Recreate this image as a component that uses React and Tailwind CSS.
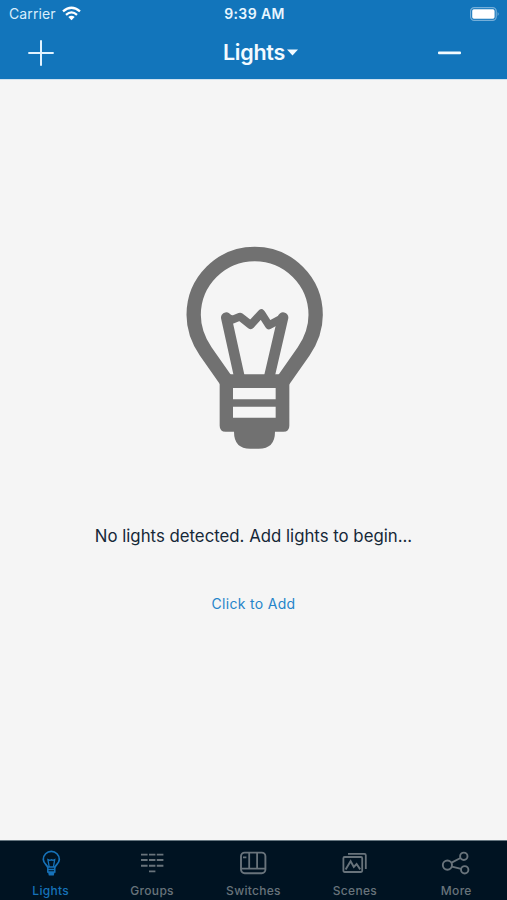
import React from "react";

function BulbIcon() {
  return (
    <svg className="ml-px" width="139" height="205" viewBox="45 30 417 615" fill="none" stroke="#717171">
      <path
        d="M168 436L107 349C83 314 71 277 71 240A183 183 0 0 1 437 240C437 277 425 314 401 349L340 436"
        strokeWidth="43"
      />
      <path d="M169 248L208 425M339 248L298 425" strokeWidth="32" strokeLinecap="round" />
      <path
        d="M169 248L188 254L210 245L242 270L274 235L297 271L339 248"
        strokeWidth="24"
        strokeLinecap="round"
        strokeLinejoin="round"
      />
      <path
        d="M149 418H358V572Q358 590 340 590H315Q315 641 266 641H241Q192 641 192 590H167Q149 590 149 572ZM189 459V493H317V459ZM189 515V548H317V515Z"
        fill="#717171"
        fillRule="evenodd"
        stroke="none"
      />
    </svg>
  );
}

function LightsIcon() {
  return (
    <svg width="30" height="30" viewBox="0 0 30 30" fill="none" stroke="currentColor" strokeWidth="1.7">
      <path d="M11.8 18.5C11.2 16 7.3 14.2 7.3 10.4A8 8 0 0 1 23.3 10.4C23.3 14.2 19.4 16 18.8 18.5" />
      <path d="M13.2 18L11.9 10.6L13.8 11.4L15.6 10.8L17 11.4L18.7 10.6L17.4 18" strokeWidth="1.3" />
      <path d="M11.8 18H18.8V23H11.8ZM11.8 20.5H18.8" strokeWidth="1.5" />
      <path d="M12 23H18.6L17.8 26.4H12.8Z" fill="currentColor" stroke="none" />
    </svg>
  );
}

function GroupsIcon() {
  return (
    <svg width="30" height="30" viewBox="0 0 30 30" fill="none" stroke="currentColor" strokeWidth="1.9">
      <path d="M4 5.6H10.6M12 5.6H18.4M19.8 5.6H26.4M4 11H10.6M12 11H18.4M19.8 11H26.4M4 16.8H10.6M12 16.8H18.4M19.8 16.8H26.4M12 22.4H18.4" />
    </svg>
  );
}

function SwitchesIcon() {
  return (
    <svg width="30" height="30" viewBox="0 0 30 30" fill="none" stroke="currentColor" strokeWidth="1.9">
      <rect x="3" y="3.6" width="24.4" height="20.6" rx="3.6" />
      <path d="M3.4 19.6H27M11.2 4V19.6M19.1 4V19.6M5 8.4H8.4" strokeWidth="1.8" />
    </svg>
  );
}

function ScenesIcon() {
  return (
    <svg width="30" height="30" viewBox="0 0 30 30" fill="none" stroke="currentColor" strokeWidth="1.8">
      <rect x="3.4" y="8" width="18.8" height="15" rx="1.2" />
      <path d="M8 4.8H24.4Q25.8 4.8 25.8 6.2V20" />
      <path d="M5.6 20.4L10.6 12.2L13.8 18L16.6 15L20.2 20.4" strokeWidth="1.9" />
    </svg>
  );
}

function MoreIcon() {
  return (
    <svg width="30" height="30" viewBox="0 0 30 30" fill="none" stroke="currentColor" strokeWidth="1.9">
      <circle cx="6.4" cy="16.1" r="4.6" />
      <circle cx="22.8" cy="7.3" r="3.7" />
      <circle cx="23.7" cy="20.8" r="3.7" />
      <path d="M10.6 13.6L19.5 9M11 17.6L20 19.8" />
    </svg>
  );
}

const tabs = [
  { name: "Lights", Icon: LightsIcon },
  { name: "Groups", Icon: GroupsIcon },
  { name: "Switches", Icon: SwitchesIcon },
  { name: "Scenes", Icon: ScenesIcon },
  { name: "More", Icon: MoreIcon },
];

function StatusBar() {
  return (
    <div className="grid h-[27px] grid-cols-3 items-center pl-[9px] pr-[7px]">
      <div className="flex items-center gap-[6px] text-[#d9edfb]">
        <span className="text-[14px] tracking-[0.1px]">Carrier</span>
        <svg width="19" height="15" viewBox="0 0 19 15" fill="none" stroke="#fff" strokeWidth="2.3">
          <path d="M1 5.4Q9.5 -2 18 5.4M4 8.8Q9.5 4 15 8.8" />
          <path d="M6.3 11.1Q9.5 8.5 12.7 11.1L9.5 14.3Z" fill="#fff" stroke="none" />
        </svg>
      </div>
      <span className="text-center text-[14px] font-semibold tracking-[0.4px] text-[#e8f6ff]">
        9:39 AM
      </span>
      <svg className="justify-self-end" width="30" height="14" viewBox="0 0 30 14">
        <rect x="0.6" y="0.6" width="25.6" height="12.8" rx="3.6" fill="none" stroke="#75afd9" strokeWidth="1.2" />
        <rect x="2.2" y="2.3" width="22.4" height="9.4" rx="1.6" fill="#fff" />
        <path d="M27.6 5Q29.8 7 27.6 9Z" fill="#75afd9" />
      </svg>
    </div>
  );
}

function NavBar() {
  return (
    <div className="grid h-[51px] grid-cols-3 items-center px-7">
      <svg width="26" height="26" viewBox="0 0 26 26" stroke="#e2f3ff" strokeWidth="2">
        <path d="M0.3 13H25.7M13 0.3V25.7" />
      </svg>
      <div className="flex items-center justify-center gap-[2px] pl-[14px] text-[#f2faff]">
        <h1 className="text-[21.5px] font-semibold leading-none tracking-[-0.25px]">Lights</h1>
        <svg width="11" height="7" viewBox="0 0 11 7" fill="currentColor">
          <path d="M0 0.5H11L5.5 6.5Z" />
        </svg>
      </div>
      <svg className="mr-[18px] justify-self-end" width="23" height="4" viewBox="0 0 23 4">
        <rect y="0.5" width="23" height="2.8" rx="1" fill="#f4fbff" />
      </svg>
    </div>
  );
}

export default function App() {
  return (
    <div className="flex h-[900px] w-[507px] flex-col overflow-hidden bg-[#f5f5f5] font-[Inter,sans-serif]">
      <header className="h-[79px] shrink-0 bg-[#1275bb]">
        <StatusBar />
        <NavBar />
      </header>
      <main className="flex flex-1 flex-col items-center border-t border-[#cfe2f0] pt-[165px]">
        <BulbIcon />
        <p className="mt-[74px] text-[16.8px] leading-6 text-[#162838]">
          No lights detected. Add lights to begin...
        </p>
        <button className="mt-[46px] text-[14px] leading-5 tracking-[0.3px] text-[#2584ca]">
          Click to Add
        </button>
      </main>
      <nav className="grid h-[60px] shrink-0 grid-cols-5 border-t border-[#667680] bg-[#001322]">
        {tabs.map(({ name, Icon }) => (
          <button
            key={name}
            className={`flex flex-col items-center pt-[8px] ${
              name === "Lights" ? "text-[#1672b9]" : "text-[#68737b]"
            }`}
          >
            <Icon />
            <span className="mt-[4px] text-[12px] font-medium leading-4 tracking-[0.3px]">{name}</span>
          </button>
        ))}
      </nav>
    </div>
  );
}
